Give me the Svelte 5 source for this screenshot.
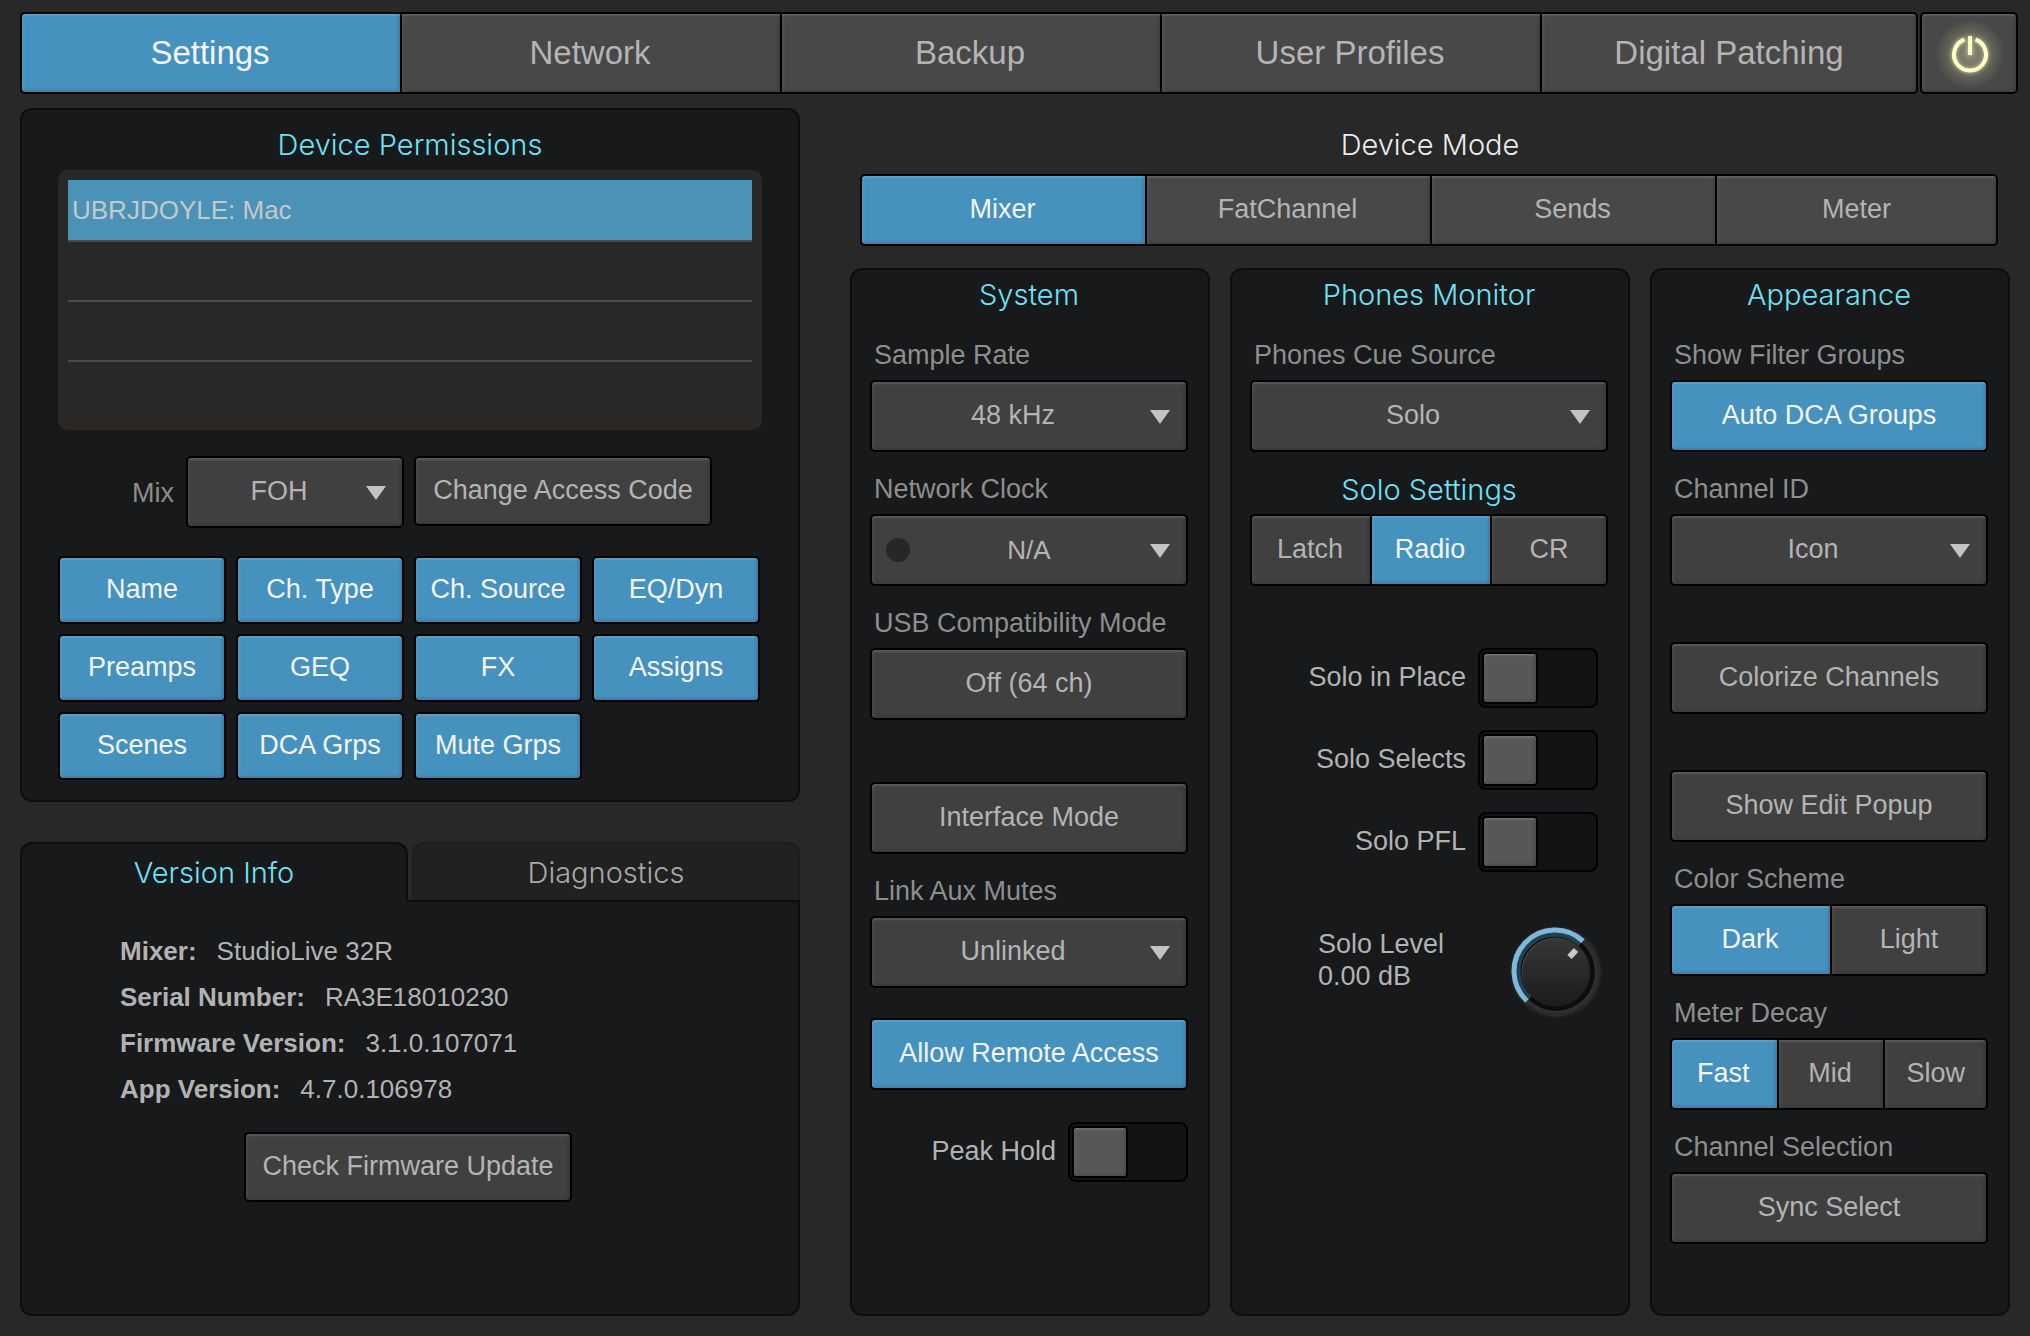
<script>
  const pages = ['Settings', 'Network', 'Backup', 'User Profiles', 'Digital Patching'];
  const modes = ['Mixer', 'FatChannel', 'Sends', 'Meter'];
  const permissionNames = [
    'Name', 'Ch. Type', 'Ch. Source', 'EQ/Dyn',
    'Preamps', 'GEQ', 'FX', 'Assigns',
    'Scenes', 'DCA Grps', 'Mute Grps'
  ];
  const info = [
    ['Mixer:', 'StudioLive 32R'],
    ['Serial Number:', 'RA3E18010230'],
    ['Firmware Version:', '3.1.0.107071'],
    ['App Version:', '4.7.0.106978']
  ];
  const soloSwitches = ['Solo in Place', 'Solo Selects', 'Solo PFL'];

  let page = $state('Settings');
  let mode = $state('Mixer');
  let soloMode = $state('Radio');
  let scheme = $state('Dark');
  let decay = $state('Fast');
  let toggles = $state({
    remote: true,
    usb: false,
    iface: false,
    dca: true,
    colorize: false,
    popup: false,
    sync: false
  });
  let permissions = $state(Object.fromEntries(permissionNames.map((n) => [n, true])));
</script>

{#snippet segments(items, current, choose, label)}
  <div class="segments" role="group" aria-label={label}>
    {#each items as item}
      <button class:on={item === current} aria-pressed={item === current} onclick={() => choose(item)}>{item}</button>
    {/each}
  </div>
{/snippet}

{#snippet dropdown(id, value, led)}
  <div class="dropdown" class:led>
    <select {id}>
      <option>{value}</option>
    </select>
    {#if led}<span class="lamp"></span>{/if}
    <svg class="arrow" viewBox="0 0 20 14" aria-hidden="true"><path d="M0 0H20L10 14Z" /></svg>
  </div>
{/snippet}

{#snippet toggleButton(key, text)}
  <button class="btn" class:on={toggles[key]} aria-pressed={toggles[key]} onclick={() => (toggles[key] = !toggles[key])}>{text}</button>
{/snippet}

<div class="app">
  <header>
    <nav class="pages" aria-label="Pages">
      {@render segments(pages, page, (v) => (page = v), 'Pages')}
    </nav>
    <button class="power" aria-label="Power">
      <svg viewBox="0 0 94 78" aria-hidden="true">
        <defs>
          <radialGradient id="glow">
            <stop offset="0" stop-color="#ffffc0" stop-opacity=".36" />
            <stop offset=".5" stop-color="#ffffc0" stop-opacity=".2" />
            <stop offset="1" stop-color="#ffffc0" stop-opacity="0" />
          </radialGradient>
          <filter id="soft" x="-50%" y="-50%" width="200%" height="200%">
            <feGaussianBlur stdDeviation="2" />
          </filter>
        </defs>
        <circle cx="48" cy="40" r="35" fill="url(#glow)" />
        <g fill="none" stroke="#ffffc4" stroke-width="4" filter="url(#soft)" opacity=".7">
          <path d="M42.500 25.500A16 16 0 1 0 53.500 25.500" />
          <path d="M48 22V41" />
        </g>
        <g fill="none" stroke="#ffffc4" stroke-width="4">
          <path d="M42.500 25.500A16 16 0 1 0 53.500 25.500" />
          <path d="M48 22V41" />
        </g>
      </svg>
    </button>
  </header>

  <main>
    <div class="left">
      <section class="panel perms">
        <h2>Device Permissions</h2>
        <ul>
          <li class="selected">UBRJDOYLE: Mac</li>
          <li></li>
          <li></li>
          <li></li>
        </ul>
        <div class="mix">
          <label for="mix">Mix</label>
          {@render dropdown('mix', 'FOH', false)}
          <button class="btn short">Change Access Code</button>
        </div>
        <div class="grants">
          {#each permissionNames as name}
            <button class="btn" class:on={permissions[name]} aria-pressed={permissions[name]} onclick={() => (permissions[name] = !permissions[name])}>{name}</button>
          {/each}
        </div>
      </section>

      <section class="about">
        <div class="tabs" role="tablist">
          <button class="tab active" role="tab" aria-selected="true">Version Info</button>
          <button class="tab" role="tab" aria-selected="false">Diagnostics</button>
        </div>
        <div class="panel info" role="tabpanel">
          <dl>
            {#each info as [term, value]}
              <div><dt>{term}</dt><dd>{value}</dd></div>
            {/each}
          </dl>
          <button class="btn short check">Check Firmware Update</button>
        </div>
      </section>
    </div>

    <div class="right">
      <h2 class="plain">Device Mode</h2>
      <div class="modes">
        {@render segments(modes, mode, (v) => (mode = v), 'Device Mode')}
      </div>

      <div class="columns">
        <section class="panel column">
          <h2>System</h2>
          <label class="cap" for="rate">Sample Rate</label>
          {@render dropdown('rate', '48 kHz', false)}
          <label class="cap" for="clock">Network Clock</label>
          {@render dropdown('clock', 'N/A', true)}
          <span class="cap">USB Compatibility Mode</span>
          {@render toggleButton('usb', 'Off (64 ch)')}
          <div class="space-l"></div>
          {@render toggleButton('iface', 'Interface Mode')}
          <label class="cap" for="aux">Link Aux Mutes</label>
          {@render dropdown('aux', 'Unlinked', false)}
          <div class="space-s"></div>
          {@render toggleButton('remote', 'Allow Remote Access')}
          <label class="switch peak"><span>Peak Hold</span><input type="checkbox" role="switch" /></label>
        </section>

        <section class="panel column">
          <h2>Phones Monitor</h2>
          <label class="cap" for="cue">Phones Cue Source</label>
          {@render dropdown('cue', 'Solo', false)}
          <h3>Solo Settings</h3>
          {@render segments(['Latch', 'Radio', 'CR'], soloMode, (v) => (soloMode = v), 'Solo Settings')}
          <div class="switches">
            {#each soloSwitches as name}
              <label class="switch"><span>{name}</span><input type="checkbox" role="switch" /></label>
            {/each}
          </div>
          <div class="level">
            <label for="level">Solo Level<br />0.00 dB</label>
            <div class="knob">
              <svg viewBox="0 0 96 96" aria-hidden="true">
                <defs>
                  <linearGradient id="face" x1="0" y1="0" x2="0" y2="1">
                    <stop offset="0" stop-color="#373737" />
                    <stop offset="1" stop-color="#1b1b1b" />
                  </linearGradient>
                  <linearGradient id="rim" x1="0" y1="0" x2="1" y2="1">
                    <stop offset="0" stop-color="#6a6a6a" />
                    <stop offset=".4" stop-color="#2c2c2c" />
                    <stop offset="1" stop-color="#161616" />
                  </linearGradient>
                  <radialGradient id="halo">
                    <stop offset=".8" stop-color="#343434" />
                    <stop offset=".92" stop-color="#2a2a2a" />
                    <stop offset="1" stop-color="#18191b" />
                  </radialGradient>
                </defs>
                <circle cx="48" cy="48" r="47" fill="url(#halo)" />
                <circle cx="48" cy="48" r="39" fill="#0d0d0d" />
                <path d="M21.800 74.200A37 37 0 0 1 72.300 20.100" fill="none" stroke="#24404f" stroke-width="5" />
                <path d="M19 77A41 41 0 0 1 75 17.100" fill="none" stroke="#7cb9dc" stroke-width="5" />
                <circle cx="48" cy="48" r="34" fill="url(#face)" stroke="url(#rim)" />
                <path d="M61.500 33L68 26" stroke="#cacaca" stroke-width="6" />
              </svg>
              <input id="level" type="range" min="-96" max="10" value="0" />
            </div>
          </div>
        </section>

        <section class="panel column">
          <h2>Appearance</h2>
          <span class="cap">Show Filter Groups</span>
          {@render toggleButton('dca', 'Auto DCA Groups')}
          <label class="cap" for="chid">Channel ID</label>
          {@render dropdown('chid', 'Icon', false)}
          <div class="space-m"></div>
          {@render toggleButton('colorize', 'Colorize Channels')}
          <div class="space-m"></div>
          {@render toggleButton('popup', 'Show Edit Popup')}
          <span class="cap">Color Scheme</span>
          {@render segments(['Dark', 'Light'], scheme, (v) => (scheme = v), 'Color Scheme')}
          <span class="cap">Meter Decay</span>
          {@render segments(['Fast', 'Mid', 'Slow'], decay, (v) => (decay = v), 'Meter Decay')}
          <span class="cap">Channel Selection</span>
          {@render toggleButton('sync', 'Sync Select')}
        </section>
      </div>
    </div>
  </main>
</div>

<style>
  :global(body) {
    background: #282828;
  }
  .app,
  .app *,
  .app *::before {
    box-sizing: border-box;
  }
  .app {
    --bevel: inset 0 3px 2px -1px rgba(255, 255, 255, 0.12), inset 2px 0 3px rgba(255, 255, 255, 0.06),
      inset -2px -2px 3px rgba(0, 0, 0, 0.14);
    display: flex;
    flex-direction: column;
    gap: 14px;
    min-height: 100vh;
    padding: 12px 20px 20px;
    background: #282828;
    color: #b2b2b2;
    font: 27px/32px 'Liberation Sans', Arial, sans-serif;
  }
  button,
  select {
    margin: 0;
    padding: 0 0 2px;
    border: 0;
    background: #404040;
    color: #b4b4b4;
    font: inherit;
    box-shadow: var(--bevel);
    cursor: pointer;
  }
  .on {
    background: #4592be;
    color: #f4f4f4;
  }
  h2,
  h3 {
    margin: 0;
    color: #6fe2f6;
    font: 300 29px/34px Inter, 'Liberation Sans', sans-serif;
    text-align: center;
  }

  /* header */
  header {
    display: flex;
    gap: 2px;
    height: 82px;
    margin-right: -8px;
  }
  .pages {
    flex: 1;
    font-size: 33px;
  }
  .pages .segments {
    height: 82px;
  }
  .pages button:not(.on),
  .modes button:not(.on),
  .power {
    background: #484848;
  }
  .power {
    width: 98px;
    padding: 0;
    border: 2px solid #000;
    border-radius: 5px;
  }
  .power svg {
    display: block;
    width: 94px;
    height: 78px;
  }

  /* controls */
  .segments {
    display: flex;
    gap: 2px;
    height: 72px;
    border: 2px solid #000;
    border-radius: 5px;
    background: #000;
    overflow: hidden;
  }
  .segments button {
    flex: 1 1 4px;
    min-width: 0;
    padding: 0 2px 2px 0;
  }
  .segments button:last-child {
    flex-basis: 0;
    padding-right: 0;
  }
  .pages .segments button {
    padding-bottom: 0;
  }
  .btn,
  select {
    height: 72px;
    width: 100%;
    border: 2px solid #000;
    border-radius: 5px;
    white-space: nowrap;
  }
  .short {
    height: 70px;
  }
  .dropdown {
    display: grid;
    align-items: center;
  }
  .dropdown > * {
    grid-area: 1 / 1;
  }
  select {
    appearance: none;
    padding-right: 32px;
    text-align: center;
    text-align-last: center;
  }
  .led select {
    padding: 0;
    font-size: 26px;
  }
  .arrow {
    justify-self: end;
    width: 20px;
    height: 14px;
    margin: 2px 18px 0 0;
    fill: #c3c3c3;
    pointer-events: none;
  }
  .lamp {
    width: 24px;
    height: 24px;
    margin-left: 16px;
    border-radius: 50%;
    background: #272727;
    pointer-events: none;
  }
  .switch {
    display: flex;
    align-items: center;
    justify-content: flex-end;
    gap: 12px;
  }
  .switch span {
    padding-bottom: 2px;
  }
  .switch input {
    appearance: none;
    display: flex;
    width: 120px;
    height: 60px;
    margin: 0;
    padding: 2px;
    border: 2px solid #000;
    border-radius: 8px;
    background: #121313;
    cursor: pointer;
  }
  .switch input::before {
    content: '';
    width: 56px;
    height: 52px;
    border: 2px solid #000;
    border-radius: 4px;
    background: #575757;
    box-shadow: var(--bevel);
  }
  .switch input:checked {
    justify-content: flex-end;
  }
  .peak {
    margin-top: 32px;
  }

  /* layout */
  main {
    flex: 1;
    display: grid;
    grid-template-columns: 780fr 1160fr;
    gap: 50px;
  }
  .left,
  .right {
    display: flex;
    flex-direction: column;
    min-width: 0;
  }
  .left {
    gap: 40px;
  }
  .panel {
    border: 2px solid #0c0d0e;
    border-radius: 12px;
    background: #18191b;
  }

  .perms {
    padding: 18px 36px 20px;
  }
  ul {
    margin: 8px 0 26px;
    padding: 10px;
    border-radius: 10px;
    background: #292826;
    list-style: none;
  }
  li {
    height: 60px;
    padding: 0 4px;
    font-size: 26px;
    line-height: 60px;
  }
  li + li {
    border-top: 2px solid #4c4b49;
  }
  .selected {
    background: #4a92b6;
    color: #c6c8ca;
  }
  .mix {
    display: grid;
    grid-template-columns: 118fr 218fr 298fr 38fr;
    gap: 10px;
    margin: 0 2px 28px 0;
  }
  .mix label {
    align-self: center;
    padding: 2px 2px 0 0;
    color: #8e8e8e;
    text-align: right;
  }
  .grants {
    display: grid;
    grid-template-columns: repeat(4, 1fr);
    gap: 10px;
    margin-right: 2px;
  }
  .grants .btn {
    height: 68px;
  }

  .about {
    flex: 1;
    display: flex;
    flex-direction: column;
  }
  .tabs {
    display: flex;
    gap: 4px;
  }
  .tab {
    flex: 1;
    height: 58px;
    padding: 2px 0 0;
    border: 2px solid #1d1d1d;
    border-bottom: 0;
    border-radius: 12px 12px 0 0;
    background: #212121;
    box-shadow: none;
    color: #a8a8a8;
    font: 300 29px/34px Inter, 'Liberation Sans', sans-serif;
  }
  .tab.active {
    z-index: 1;
    height: 60px;
    margin-bottom: -2px;
    padding: 0;
    border-color: #0c0d0e;
    background: #18191b;
    color: #6fe2f6;
  }
  .info {
    flex: 1;
    padding: 26px 38px 26px 34px;
    border-top-left-radius: 0;
    border-top-right-radius: 0;
  }
  dl {
    margin: 0 0 20px 64px;
    font-size: 26px;
    line-height: 46px;
  }
  dl div {
    display: flex;
    gap: 20px;
  }
  dt {
    font-weight: bold;
  }
  dd {
    margin: 0;
  }
  .check {
    display: block;
    width: 328px;
    margin: 0 auto;
  }

  .plain {
    margin: 20px 0 12px;
    color: #ececec;
  }
  .modes {
    margin: 0 12px 22px 10px;
  }
  .columns {
    flex: 1;
    display: grid;
    grid-template-columns: 360fr 400fr 360fr;
    gap: 20px;
  }
  .column {
    min-width: 0;
    padding: 8px 20px 20px 18px;
  }
  .column h2 {
    margin-bottom: 6px;
  }
  .column h3 {
    margin: 21px 0 7px;
  }
  .cap {
    display: block;
    padding: 21px 4px 9px;
    color: #8e8e8e;
    white-space: nowrap;
  }
  .space-l {
    height: 62px;
  }
  .space-m {
    height: 56px;
  }
  .space-s {
    height: 30px;
  }
  .switches {
    display: grid;
    gap: 22px;
    margin: 62px 10px 0 0;
  }
  .level {
    display: flex;
    justify-content: space-between;
    margin: 52px 4px 0 68px;
  }
  .level label {
    padding-top: 4px;
  }
  .knob {
    display: grid;
    width: 96px;
    height: 96px;
  }
  .knob > * {
    grid-area: 1 / 1;
    width: 96px;
    height: 96px;
    margin: 0;
  }
  .knob input {
    opacity: 0;
    cursor: pointer;
  }
</style>
